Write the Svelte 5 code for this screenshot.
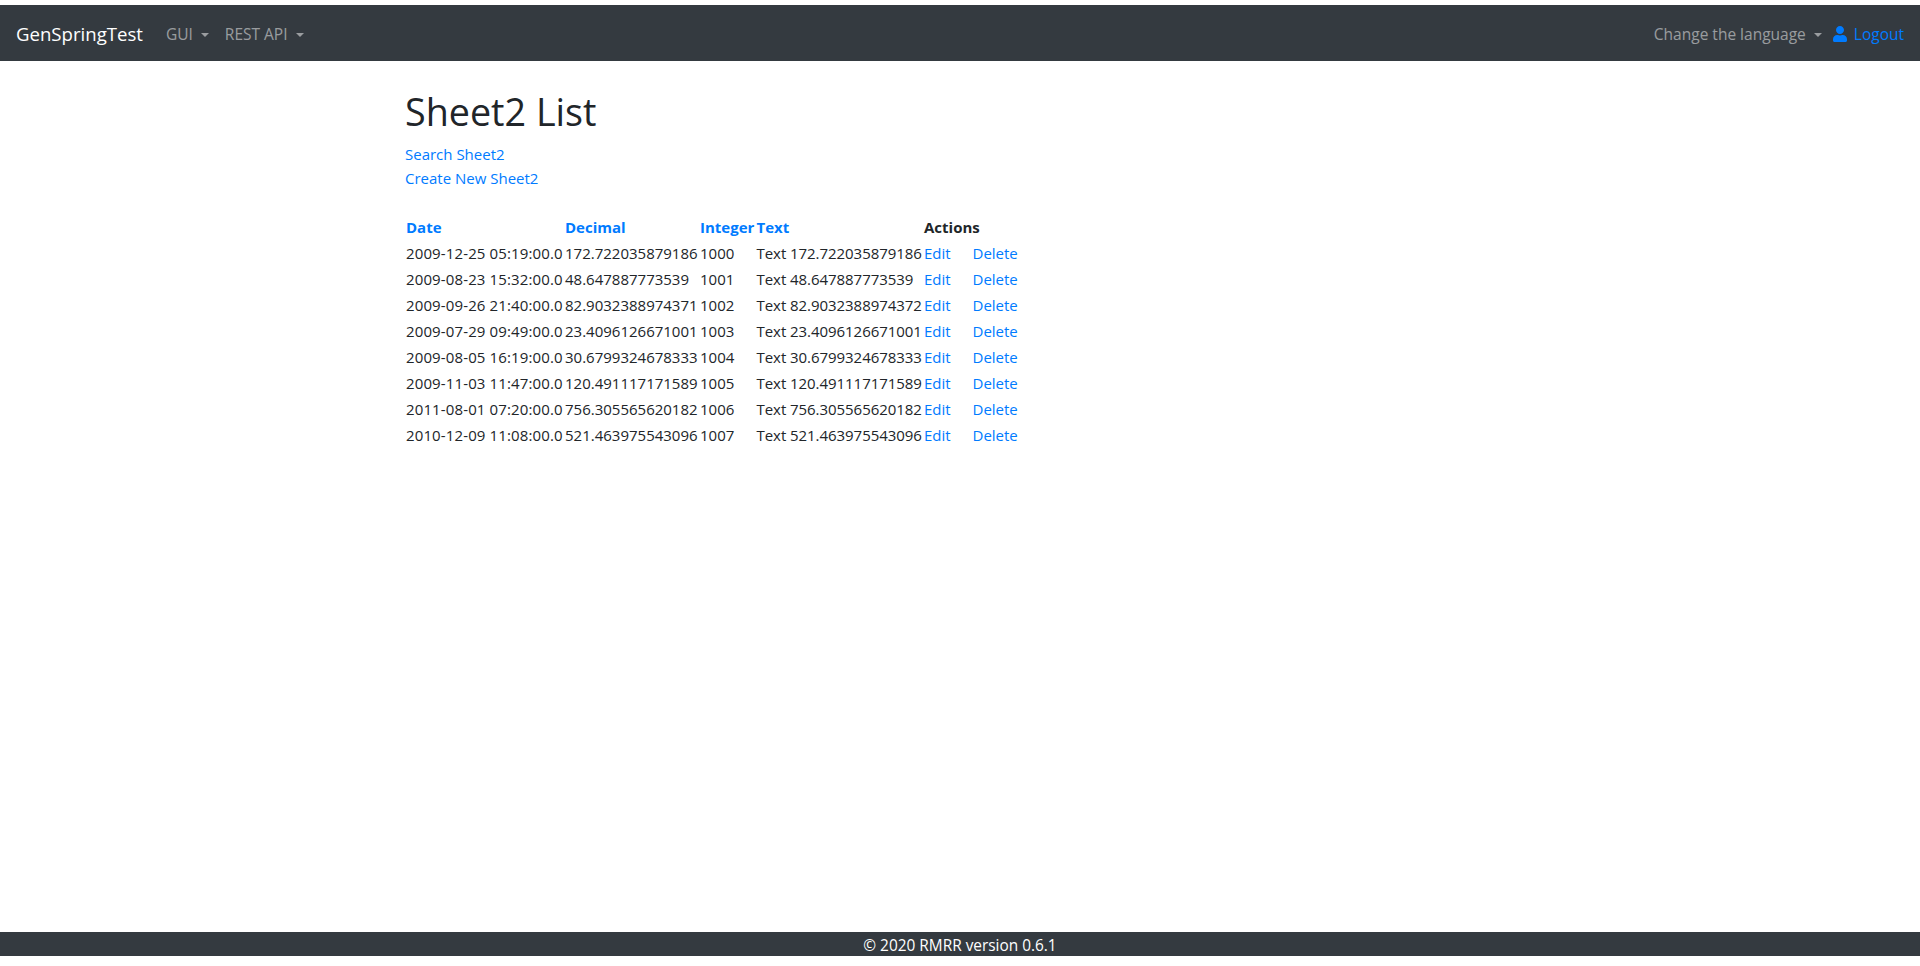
<script>
  const rows = [
    ['2009-12-25 05:19:00.0', '172.722035879186', '1000', 'Text 172.722035879186'],
    ['2009-08-23 15:32:00.0', '48.647887773539', '1001', 'Text 48.647887773539'],
    ['2009-09-26 21:40:00.0', '82.9032388974371', '1002', 'Text 82.9032388974372'],
    ['2009-07-29 09:49:00.0', '23.4096126671001', '1003', 'Text 23.4096126671001'],
    ['2009-08-05 16:19:00.0', '30.6799324678333', '1004', 'Text 30.6799324678333'],
    ['2009-11-03 11:47:00.0', '120.491117171589', '1005', 'Text 120.491117171589'],
    ['2011-08-01 07:20:00.0', '756.305565620182', '1006', 'Text 756.305565620182'],
    ['2010-12-09 11:08:00.0', '521.463975543096', '1007', 'Text 521.463975543096']
  ];
</script>

<div class="page">
  <nav class="navbar">
    <a class="brand" href="#/">GenSpringTest</a>
    <a class="nav-link toggle" href="#/">GUI</a>
    <a class="nav-link toggle" href="#/">REST API</a>
    <div class="right">
      <a class="nav-link toggle lang" href="#/">Change the language</a>
      <a class="nav-link logout" href="#/">
        <svg viewBox="0 0 448 512" width="14" height="16" fill="currentColor">
          <path d="M224 256c70.7 0 128-57.3 128-128S294.7 0 224 0 96 57.3 96 128s57.3 128 128 128zm89.6 32h-16.7c-22.2 10.2-46.9 16-72.9 16s-50.6-5.8-72.9-16h-16.7C60.2 288 0 348.2 0 422.4V464c0 26.5 21.5 48 48 48h352c26.5 0 48-21.5 48-48v-41.6c0-74.2-60.2-134.4-134.4-134.4z" />
        </svg>
        Logout
      </a>
    </div>
  </nav>

  <main class="container">
    <h1>Sheet2 List</h1>
    <div class="links">
      <a href="#/">Search Sheet2</a>
      <a href="#/">Create New Sheet2</a>
    </div>

    <table>
      <colgroup>
        <col class="c-date" />
        <col class="c-decimal" />
        <col class="c-integer" />
        <col class="c-text" />
        <col class="c-edit" />
        <col class="c-delete" />
      </colgroup>
      <thead>
        <tr>
          <th><a href="#/">Date</a></th>
          <th><a href="#/">Decimal</a></th>
          <th><a href="#/">Integer</a></th>
          <th><a href="#/">Text</a></th>
          <th colspan="2">Actions</th>
        </tr>
      </thead>
      <tbody>
        {#each rows as row}
          <tr>
            {#each row as cell, i}
              <td class:date={i === 0} class:text={i === 3}>{cell}</td>
            {/each}
            <td><a href="#/">Edit</a></td>
            <td><a href="#/">Delete</a></td>
          </tr>
        {/each}
      </tbody>
    </table>
  </main>

  <footer>© 2020 RMRR version 0.6.1</footer>
</div>

<style>
  :global(body) {
    font-family: "Open Sans", "Noto Sans", sans-serif;
    font-size: 15px;
    color: #212529;
    background: #fff;
  }

  a {
    color: #007bff;
    text-decoration: none;
  }

  .page {
    display: flex;
    flex-direction: column;
    height: 966px;
    padding: 5px 0 10px;
    box-sizing: border-box;
  }

  .navbar {
    display: flex;
    align-items: center;
    height: 56px;
    padding: 0 16px;
    box-sizing: border-box;
    background: #343a40;
  }

  .brand {
    margin-right: 15px;
    font-size: 18.6px;
    color: #fff;
  }

  .nav-link {
    padding: 9px 8px 8px;
    font-size: 15.5px;
    line-height: 24px;
    color: rgba(255, 255, 255, 0.5);
  }

  .toggle::after {
    content: "";
    display: inline-block;
    margin-left: 8px;
    vertical-align: 3px;
    border-top: 4.8px solid;
    border-right: 4.8px solid transparent;
    border-left: 4.8px solid transparent;
  }

  .right {
    display: flex;
    align-items: center;
    margin-left: auto;
  }

  .nav-link.lang {
    padding-right: 3px;
  }

  .nav-link.logout {
    display: flex;
    align-items: center;
    gap: 7px;
    padding-right: 0;
    color: #007bff;
  }

  .container {
    flex: 1;
    width: 1140px;
    margin: 0 auto;
    padding: 0 15px;
    box-sizing: border-box;
  }

  h1 {
    margin: 26.5px 0 6.5px;
    font-size: 37.7px;
    font-weight: 400;
    line-height: 48px;
  }

  .links {
    display: flex;
    flex-direction: column;
    align-items: flex-start;
    line-height: 24px;
    margin-bottom: 24px;
  }

  table {
    table-layout: fixed;
    width: 613px;
    border-collapse: collapse;
    white-space: nowrap;
  }

  .c-date { width: 159px; }
  .c-decimal { width: 135px; }
  .c-integer { width: 56.5px; }
  .c-text { width: 167.5px; }
  .c-edit { width: 48.5px; }
  .c-delete { width: 46.5px; }

  th,
  td {
    padding: 1px;
    line-height: 24px;
    text-align: left;
  }

  td.date {
    letter-spacing: 0.13px;
  }

  td.text {
    letter-spacing: -0.05px;
  }

  th {
    font-weight: 700;
    color: #212529;
  }

  footer {
    height: 24px;
    padding-top: 2px;
    box-sizing: border-box;
    font-size: 15.4px;
    line-height: 24px;
    text-align: center;
    background: #343a40;
    color: #fff;
  }
</style>
